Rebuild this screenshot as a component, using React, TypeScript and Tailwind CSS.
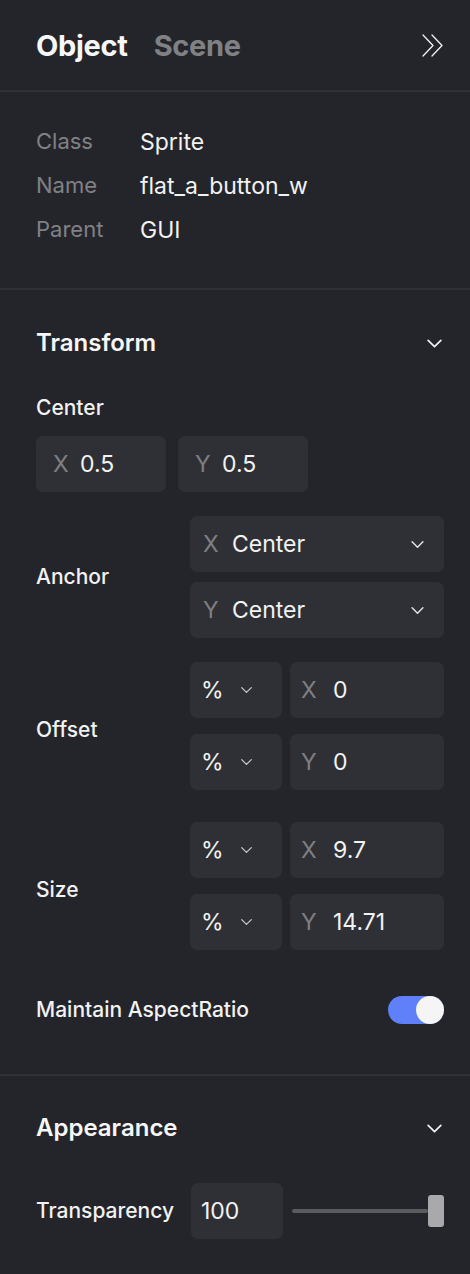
import React from "react";

const Chevron = ({ className = "" }: { className?: string }) => (
  <svg viewBox="0 0 16 10" className={className} fill="none" stroke="currentColor" strokeWidth={1.6} strokeLinecap="round" strokeLinejoin="round">
    <path d="M2 2 L8 8 L14 2" />
  </svg>
);

const NumInput = ({ axis, value, w, pl = "pl-[17px]", aw = "w-[27px]" }: { axis: string; value: string; w: string; pl?: string; aw?: string }) => (
  <div className={`${w} h-14 rounded-[7px] bg-[#2f3035] flex items-center ${pl}`}>
    <span className={`${aw} text-[23px] text-[#7e7f83]`}>{axis}</span>
    <span className="text-[23px] text-[#f2f2f2]">{value}</span>
  </div>
);

const UnitSelect = () => (
  <div className="w-[92px] h-14 rounded-[7px] bg-[#2f3035] flex items-center pl-[11px]">
    <span className="w-[39px] text-[23px] text-[#f2f2f2]">%</span>
    <Chevron className="w-[13px] h-[8px] text-[#c9c9cb]" />
  </div>
);

const AnchorSelect = ({ axis }: { axis: string }) => (
  <div className="w-full h-14 rounded-[7px] bg-[#2f3035] flex items-center pl-[13px] pr-[19px]">
    <span className="text-[23px] text-[#7e7f83] w-[29px]">{axis}</span>
    <span className="text-[23px] text-[#f2f2f2] flex-1">Center</span>
    <Chevron className="w-[15px] h-[9px] text-[#e5e5e7]" />
  </div>
);

export default function App() {
  return (
    <div
      className="w-[470px] h-[1274px] bg-[#24252a] text-[#f2f2f2] overflow-hidden"
      style={{ fontFamily: "Inter, 'Noto Sans', sans-serif" }}
    >
      {/* Header */}
      <div className="h-[92px] border-b-2 border-[#303136] flex items-center pl-9 pr-[25px] pt-[1px]">
        <div className="flex items-baseline gap-[26px] flex-1">
          <span className="text-[29px] font-bold text-[#f7f7f7] tracking-[-0.3px]">Object</span>
          <span className="text-[29px] font-bold text-[#808185] tracking-[-0.3px]">Scene</span>
        </div>
        <svg viewBox="0 0 24 24" className="w-[24px] h-[25px] text-[#f2f2f2]" fill="none" stroke="currentColor" strokeWidth={1.3} strokeLinecap="round" strokeLinejoin="round">
          <path d="M2 1.5 L12 12 L2 22.5" />
          <path d="M11 1.5 L21 12 L11 22.5" />
        </svg>
      </div>

      {/* Info */}
      <div className="border-b-2 border-[#303136] pl-9 pr-[26px] pt-[28px] pb-[36px]">
        {[
          ["Class", "Sprite"],
          ["Name", "flat_a_button_w"],
          ["Parent", "GUI"],
        ].map(([k, v]) => (
          <div key={k} className="h-11 flex items-center">
            <span className="w-[104px] text-[22px] text-[#808185] -mt-[2px]">{k}</span>
            <span className="text-[23px] text-[#f2f2f2]">{v}</span>
          </div>
        ))}
      </div>

      {/* Transform */}
      <div className="border-b-2 border-[#303136] pl-9 pr-[26px] pt-[33px] pb-[36px]">
        <div className="h-10 flex items-center justify-between">
          <span className="text-[24px] font-semibold text-[#f7f7f7]">Transform</span>
          <Chevron className="w-[17px] h-[11px] text-[#f2f2f2] mr-[1px]" />
        </div>
        <div className="mt-[33px] h-6 flex items-center">
          <span className="text-[21px] font-medium">Center</span>
        </div>
        <div className="mt-[16px] flex gap-3">
          <NumInput axis="X" value="0.5" w="w-[130px]" />
          <NumInput axis="Y" value="0.5" w="w-[130px]" />
        </div>

        <div className="mt-6 flex items-center">
          <span className="w-[154px] text-[21px] font-medium">Anchor</span>
          <div className="flex-1 flex flex-col gap-[10px]">
            <AnchorSelect axis="X" />
            <AnchorSelect axis="Y" />
          </div>
        </div>

        <div className="mt-6 flex items-center">
          <span className="w-[154px] text-[21px] font-medium pt-[8px]">Offset</span>
          <div className="flex-1 flex flex-col gap-4">
            <div className="flex gap-2">
              <UnitSelect />
              <NumInput axis="X" value="0" w="flex-1" pl="pl-[11px]" aw="w-[32px]" />
            </div>
            <div className="flex gap-2">
              <UnitSelect />
              <NumInput axis="Y" value="0" w="flex-1" pl="pl-[11px]" aw="w-[32px]" />
            </div>
          </div>
        </div>

        <div className="mt-8 flex items-center">
          <span className="w-[154px] text-[21px] font-medium pt-[8px]">Size</span>
          <div className="flex-1 flex flex-col gap-4">
            <div className="flex gap-2">
              <UnitSelect />
              <NumInput axis="X" value="9.7" w="flex-1" pl="pl-[11px]" aw="w-[32px]" />
            </div>
            <div className="flex gap-2">
              <UnitSelect />
              <NumInput axis="Y" value="14.71" w="flex-1" pl="pl-[11px]" aw="w-[32px]" />
            </div>
          </div>
        </div>

        <div className="mt-8 h-14 flex items-center justify-between">
          <span className="text-[21px] font-medium">Maintain AspectRatio</span>
          <div className="w-[56px] h-[28px] rounded-full bg-[#5f80f9] flex items-center justify-end">
            <div className="w-[28px] h-[28px] rounded-full bg-[#f5f5f5]" />
          </div>
        </div>
      </div>

      {/* Appearance */}
      <div className="pl-9 pr-[26px] pt-[32px]">
        <div className="h-10 flex items-center justify-between">
          <span className="text-[24px] font-semibold text-[#f7f7f7]">Appearance</span>
          <Chevron className="w-[17px] h-[11px] text-[#f2f2f2] mr-[1px]" />
        </div>
        <div className="mt-[35px] flex items-center">
          <span className="w-[155px] text-[21px] font-medium">Transparency</span>
          <div className="w-[92px] h-14 rounded-[7px] bg-[#2f3035] flex items-center pl-[10px]">
            <span className="text-[23px] text-[#f2f2f2]">100</span>
          </div>
          <div className="flex-1 ml-[9px] flex items-center">
            <div className="flex-1 h-[4px] rounded-full bg-[#5a5b5f]" />
            <div className="w-[16px] h-[32px] rounded-[3px] bg-[#a9a9ab]" />
          </div>
        </div>
      </div>
    </div>
  );
}
